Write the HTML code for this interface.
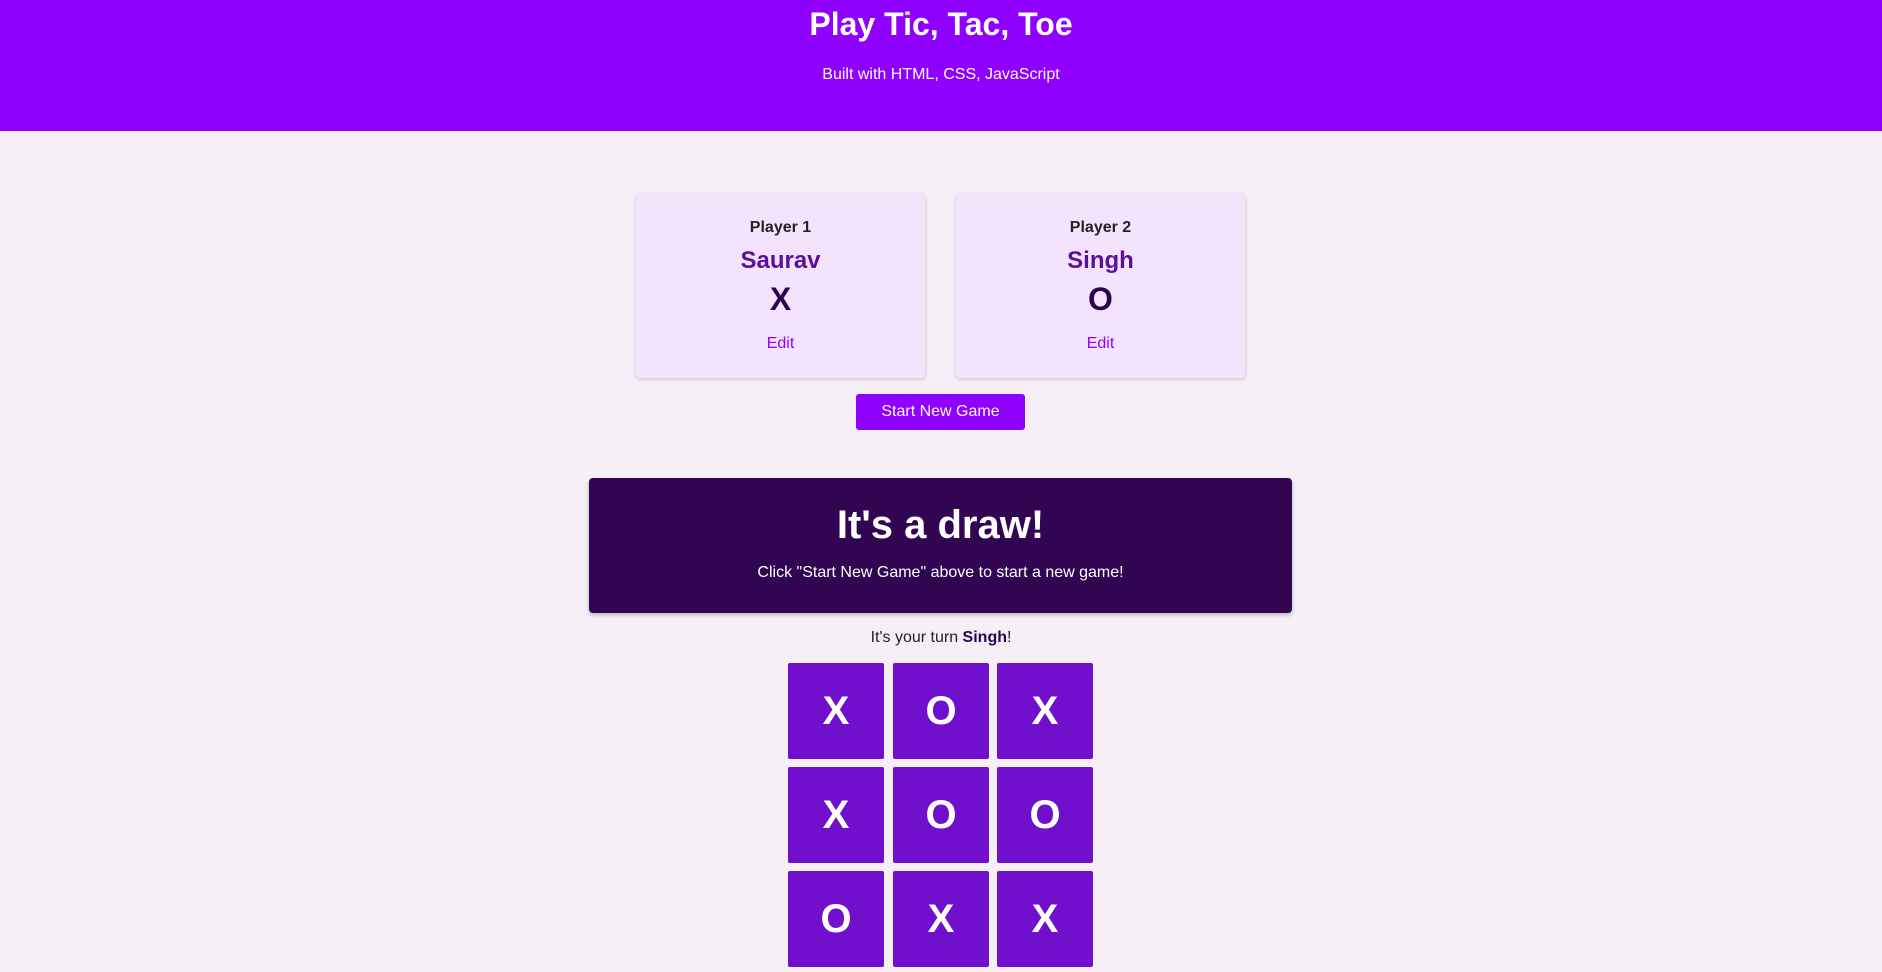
<!DOCTYPE html>
<html><head><meta charset="utf-8"><style>
*{box-sizing:border-box;margin:0;padding:0}
body{width:1882px;height:972px;overflow:hidden;background:#f6eff7;font-family:"Liberation Sans",sans-serif;color:#222}
header{background:#9000ff;height:131px;text-align:center;color:#fff}
header h1{font-size:32px;padding-top:6px;line-height:36px}
header p{font-size:16px;margin-top:24px}
.card{position:absolute;top:194px;width:289px;height:184px;background:#f4e3fd;border-radius:4px;box-shadow:0 1px 4px rgba(0,0,0,.2);text-align:center}
.card h3{font-size:16px;margin-top:25px;line-height:18px}
.card .n{font-size:24px;font-weight:bold;color:#5e0d9e;margin-top:10px;line-height:28px}
.card .s{font-size:32px;font-weight:bold;color:#2e0350;margin-top:6px;line-height:36px}
.card .e{font-size:16px;color:#9000ff;margin-top:18px}
.btn{position:absolute;left:856px;top:394px;width:169px;height:36px;background:#9000ff;color:#fff;border-radius:3px;font-size:16px;text-align:center;line-height:36px}
.draw{position:absolute;left:589px;top:478px;width:703px;height:135px;background:#320553;border-radius:4px;box-shadow:0 2px 4px rgba(0,0,0,.25);color:#fff;text-align:center}
.draw h2{font-size:40px;margin-top:24px;line-height:46px}
.draw p{font-size:16px;margin-top:16px}
.turn{position:absolute;left:0;width:1882px;top:629px;text-align:center;font-size:16px}
.turn b{color:#2e0350}
.c{position:absolute;width:96px;height:96px;background:#7010cc;border-radius:2px;color:#fff;font-size:40px;font-weight:bold;text-align:center;line-height:96px}
</style></head><body>
<header><h1>Play Tic, Tac, Toe</h1><p>Built with HTML, CSS, JavaScript</p></header>
<div class="card" style="left:636px"><h3>Player 1</h3><div class="n">Saurav</div><div class="s">X</div><div class="e">Edit</div></div>
<div class="card" style="left:956px"><h3>Player 2</h3><div class="n">Singh</div><div class="s">O</div><div class="e">Edit</div></div>
<div class="btn">Start New Game</div>
<div class="draw"><h2>It's a draw!</h2><p>Click "Start New Game" above to start a new game!</p></div>
<div class="turn">It's your turn <b>Singh</b>!</div>
<div class="c" style="left:788px;top:663px">X</div>
<div class="c" style="left:893px;top:663px">O</div>
<div class="c" style="left:997px;top:663px">X</div>
<div class="c" style="left:788px;top:767px">X</div>
<div class="c" style="left:893px;top:767px">O</div>
<div class="c" style="left:997px;top:767px">O</div>
<div class="c" style="left:788px;top:871px">O</div>
<div class="c" style="left:893px;top:871px">X</div>
<div class="c" style="left:997px;top:871px">X</div>
</body></html>
